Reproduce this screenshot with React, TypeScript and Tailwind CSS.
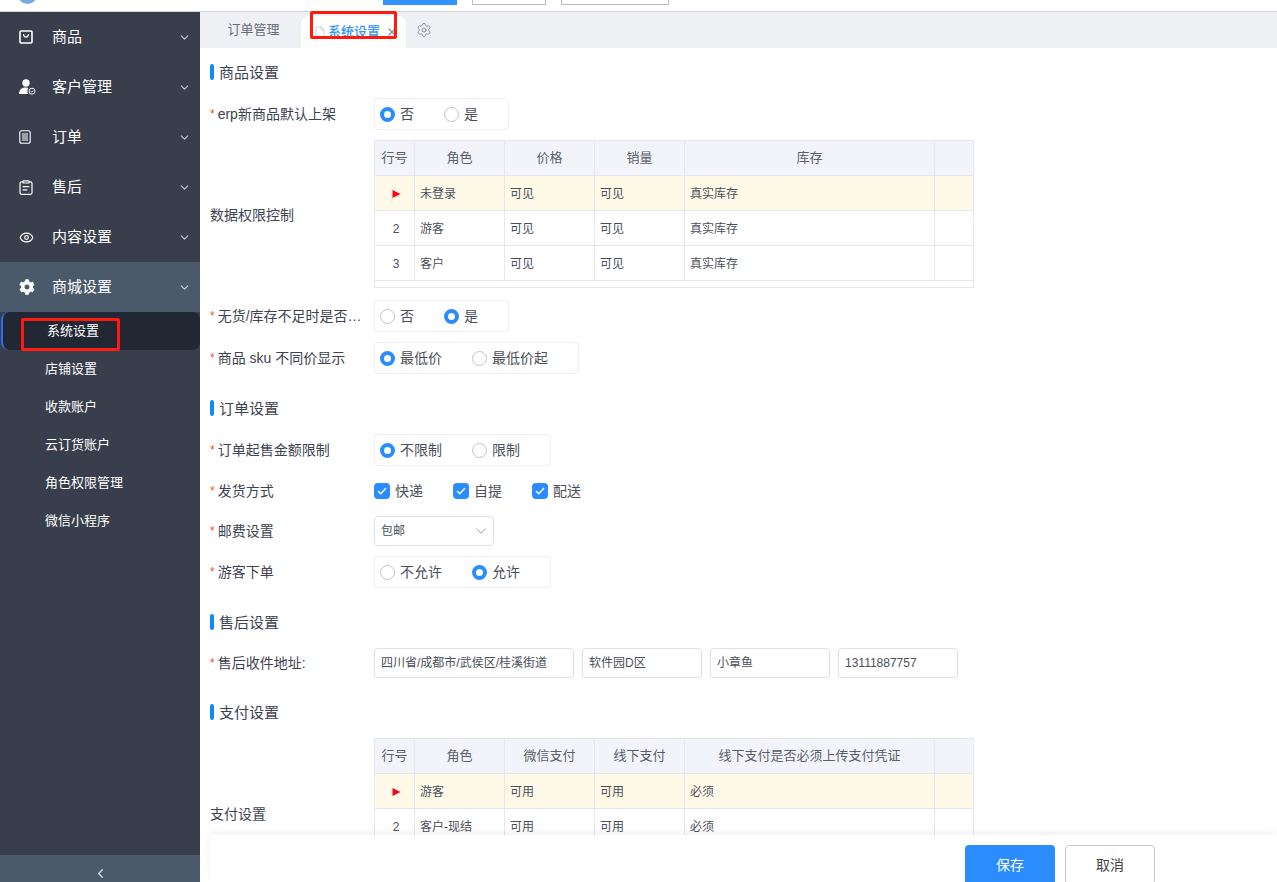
import { ChevronDown, ChevronLeft, Eye, File, Settings, X } from "lucide-react";
import { FaCog } from "react-icons/fa";
import type { ReactNode } from "react";

const font = { fontFamily: '"Liberation Sans", "Noto Sans CJK SC", sans-serif' };

function BagIcon() {
  return (
    <svg width="14" height="14" viewBox="0 0 14 14" fill="none" stroke="white" strokeWidth="1.6">
      <rect x="1" y="1" width="12" height="12" rx="1" />
      <path d="M4.4 4.2c.3 2 1.3 3 2.6 3s2.3-1 2.6-3" strokeWidth="1.2" />
    </svg>
  );
}

function UserCheckIcon() {
  return (
    <svg width="17" height="16" viewBox="0 0 17 16" fill="white">
      <circle cx="7" cy="4" r="3.7" />
      <path d="M0 15c0-4 2.6-6.5 6.5-6.5 1.2 0 2.2.2 3 .6-1.3 1.3-1.6 4-.4 5.9H0.8c-.5 0-.8-.1-.8 0z" />
      <circle cx="13" cy="12.2" r="3" fill="none" stroke="white" strokeWidth="1" />
      <path d="M11.7 12.2l1 1 1.6-1.7" fill="none" stroke="white" strokeWidth="0.9" />
    </svg>
  );
}

function ListIcon() {
  return (
    <svg width="12" height="14" viewBox="0 0 12 14" fill="none" stroke="white" strokeWidth="1.1">
      <rect x="0.8" y="0.8" width="10.4" height="12.4" rx="2" />
      <path d="M3 4h6M3 6h6M3 8h6M3 10h6" />
    </svg>
  );
}

function ClipboardIcon() {
  return (
    <svg width="14" height="15" viewBox="0 0 14 15" fill="none" stroke="white" strokeWidth="1.2">
      <path d="M4 1.8H2.6a1.6 1.6 0 0 0-1.6 1.6v9.4a1.6 1.6 0 0 0 1.6 1.6h8.8a1.6 1.6 0 0 0 1.6-1.6V3.4a1.6 1.6 0 0 0-1.6-1.6H10" />
      <rect x="4" y="0.8" width="6" height="2.2" rx="0.6" />
      <path d="M3.6 6.6h6.8M3.6 9.8h4.6" />
    </svg>
  );
}

type MenuItem = { label: string; icon: ReactNode; active?: boolean };

const menu: MenuItem[] = [
  { label: "商品", icon: <BagIcon /> },
  { label: "客户管理", icon: <UserCheckIcon /> },
  { label: "订单", icon: <ListIcon /> },
  { label: "售后", icon: <ClipboardIcon /> },
  { label: "内容设置", icon: <Eye size={15} color="white" strokeWidth={1.8} /> },
  { label: "商城设置", icon: <FaCog size={16} color="white" />, active: true },
];

const subMenu = ["店铺设置", "收款账户", "云订货账户", "角色权限管理", "微信小程序"];

function Sidebar() {
  return (
    <aside className="flex h-full w-[200px] shrink-0 flex-col bg-[#383e4b] text-white">
      {menu.map((item) => (
        <div
          key={item.label}
          className={`flex h-[50px] items-center pl-[19px] pr-[9px] ${item.active ? "bg-[#4b5a6a]" : ""}`}
        >
          <span className="flex w-[33px] shrink-0 items-center">{item.icon}</span>
          <span className="flex-1 text-[15px]">{item.label}</span>
          <ChevronDown size={13} className="text-[#c6ccd4]" />
        </div>
      ))}
      <div className="ml-px flex h-[38px] items-center rounded-lg border-l-2 border-[#2f6fe0] bg-[#212833] pl-[44px] text-[13px]">
        系统设置
      </div>
      {subMenu.map((label) => (
        <div key={label} className="flex h-[38px] items-center pl-[45px] text-[13px]">
          {label}
        </div>
      ))}
      <div className="mt-auto flex h-[27px] items-end justify-center bg-[#4b5a6a] pb-px">
        <ChevronLeft size={15} className="text-[#d7dce2]" />
      </div>
    </aside>
  );
}

function TopBar() {
  return (
    <div className="flex h-3 shrink-0 overflow-hidden border-b border-[#d4d4d4] bg-white">
      <div className="ml-[18px] -mt-[15px] h-[19px] w-[19px] rounded-full bg-[#7aa6e4]" />
      <div className="ml-[346px] -mt-[15px] h-5 w-[74px] bg-[#3194fc]" />
      <div className="ml-[15px] -mt-[15px] h-5 w-[74px] border border-[#bdbdbd]" />
      <div className="ml-[15px] -mt-[15px] h-5 w-[108px] border border-[#bdbdbd]" />
    </div>
  );
}

function Tabs() {
  return (
    <div className="flex h-9 shrink-0 items-end bg-[#eff0f4] text-[13px]">
      <div className="flex h-9 w-[101px] items-center justify-center pl-[6px] text-[#666c78]">订单管理</div>
      <div className="flex h-[32px] w-[105px] items-center rounded-t-lg bg-white pl-[13px]">
        <File size={12} strokeWidth={1} className="text-[#8fa3c8]" />
        <span className="ml-[2px] font-medium text-[#3194fc]">系统设置</span>
        <X size={12} strokeWidth={2.5} className="ml-[6px] text-[#8a8f99]" />
      </div>
      <div className="flex h-9 items-center pl-[10px]">
        <Settings size={16} strokeWidth={1} className="text-[#5f6672]" />
      </div>
    </div>
  );
}

function SectionTitle({ title, className }: { title: string; className: string }) {
  return (
    <div className={`flex h-4 items-center text-[15px] leading-4 text-[#3d4350] ${className}`}>
      <span className="mr-[5px] h-4 w-1 rounded-sm bg-[#0f8aff]" />
      <span className="pt-[2px]">{title}</span>
    </div>
  );
}

function Field({
  label,
  required = true,
  className,
  labelClassName = "",
  children,
}: {
  label: string;
  required?: boolean;
  className: string;
  labelClassName?: string;
  children: ReactNode;
}) {
  return (
    <div className={`flex items-center ${className}`}>
      <div className={`flex w-[164px] shrink-0 items-center pr-[10px] text-[14px] text-[#3d4350] ${labelClassName}`}>
        {required && <span className="mr-[3px] text-[12px] text-[#f0522f]">*</span>}
        <span className="truncate">{label}</span>
      </div>
      {children}
    </div>
  );
}

function RadioBox({ options, selected }: { options: string[]; selected: number }) {
  return (
    <div className="flex h-8 items-center rounded-sm border border-[#eeeef3] pl-[5px] text-[14px] text-[#4a4f5a]">
      {options.map((option, i) => (
        <div key={option} className="mr-[30px] flex items-center">
          {i === selected ? (
            <span className="h-[15px] w-[15px] rounded-full border-[4px] border-[#2a8cff] bg-white" />
          ) : (
            <span className="h-[15px] w-[15px] rounded-full border border-[#c4c4c4] bg-white" />
          )}
          <span className="ml-[5px] whitespace-nowrap">{option}</span>
        </div>
      ))}
    </div>
  );
}

function Checkbox({ label }: { label: string }) {
  return (
    <div className="mr-[30px] flex items-center text-[14px] text-[#4a4f5a]">
      <span className="flex h-4 w-4 items-center justify-center rounded-sm bg-[#2a8cff]">
        <svg width="10" height="8" viewBox="0 0 10 8" fill="none" stroke="white" strokeWidth="1.4">
          <path d="M1 4l2.8 2.8L9 1" />
        </svg>
      </span>
      <span className="ml-[5px]">{label}</span>
    </div>
  );
}

function TextBox({ value, width }: { value: string; width: string }) {
  return (
    <div className={`flex h-[30px] items-center rounded-sm border border-[#dfe1e6] pl-[6px] text-[12px] text-[#4a4f5a] ${width}`}>
      {value}
    </div>
  );
}

type TableProps = {
  headers: string[];
  rows: string[][];
};

const colWidths = ["w-[40px]", "w-[90px]", "w-[90px]", "w-[90px]", "w-[250px]", "w-[39px]"];

function DataTable({ headers, rows }: TableProps) {
  return (
    <div className="h-[148px] w-[600px] shrink-0 border-b border-r border-[#e4e7ef]">
      <div className="flex h-[35px] bg-[#f2f4f9] text-[13px] text-[#5a5f6c]">
        {["行号", ...headers, ""].map((h, i) => (
          <div
            key={i}
            className={`flex shrink-0 items-center justify-center border-l border-t border-[#e4e7ef] ${colWidths[i]}`}
          >
            {h}
          </div>
        ))}
      </div>
      {rows.map((row, r) => (
        <div key={r} className={`flex h-[35px] text-[12px] text-[#4a4f5a] ${r === 0 ? "bg-[#fff9e8]" : ""}`}>
          <div className="flex w-[40px] shrink-0 items-center justify-center border-l border-t border-[#e4e7ef] pl-[3px] pt-[2px]">
            {r === 0 ? (
              <svg width="9" height="8" viewBox="0 0 9 8" fill="#ff0018">
                <path d="M0.5 0L8.5 4L0.5 8z" />
              </svg>
            ) : (
              r + 1
            )}
          </div>
          {row.map((cell, c) => (
            <div
              key={c}
              className={`flex shrink-0 items-center border-l border-t border-[#e4e7ef] pl-[5px] pt-[2px] ${colWidths[c + 1]}`}
            >
              {cell}
            </div>
          ))}
          <div className="w-[39px] shrink-0 border-l border-t border-[#e4e7ef]" />
        </div>
      ))}
      <div className="h-2 border-l border-t border-[#e4e7ef]" />
    </div>
  );
}

function Form() {
  return (
    <div className="flex-1 overflow-hidden bg-white pl-[10px] pt-4">
      <SectionTitle title="商品设置" className="" />
      <Field label="erp新商品默认上架" className="mt-[18px]">
        <RadioBox options={["否", "是"]} selected={0} />
      </Field>
      <Field label="数据权限控制" required={false} labelClassName="pt-[2px]" className="mt-[10px]">
        <DataTable
          headers={["角色", "价格", "销量", "库存"]}
          rows={[
            ["未登录", "可见", "可见", "真实库存"],
            ["游客", "可见", "可见", "真实库存"],
            ["客户", "可见", "可见", "真实库存"],
          ]}
        />
      </Field>
      <Field label="无货/库存不足时是否允许下单" className="mt-3">
        <RadioBox options={["否", "是"]} selected={1} />
      </Field>
      <Field label="商品 sku 不同价显示" className="mt-[10px]">
        <RadioBox options={["最低价", "最低价起"]} selected={0} />
      </Field>

      <SectionTitle title="订单设置" className="mt-[26px]" />
      <Field label="订单起售金额限制" className="mt-[18px]">
        <RadioBox options={["不限制", "限制"]} selected={0} />
      </Field>
      <Field label="发货方式" className="mt-[10px] h-[30px]">
        <Checkbox label="快递" />
        <Checkbox label="自提" />
        <Checkbox label="配送" />
      </Field>
      <Field label="邮费设置" className="mt-[10px]">
        <div className="flex h-[30px] w-[120px] items-center justify-between rounded border border-[#dfe1e6] pl-[6px] pr-[3px] text-[12px] text-[#4a4f5a]">
          包邮
          <ChevronDown size={18} strokeWidth={1} className="text-[#777]" />
        </div>
      </Field>
      <Field label="游客下单" className="mt-[10px]">
        <RadioBox options={["不允许", "允许"]} selected={1} />
      </Field>

      <SectionTitle title="售后设置" className="mt-[26px]" />
      <Field label="售后收件地址:" className="mt-[18px]">
        <div className="flex gap-2">
          <TextBox value="四川省/成都市/武侯区/桂溪街道" width="w-[200px]" />
          <TextBox value="软件园D区" width="w-[120px]" />
          <TextBox value="小章鱼" width="w-[120px]" />
          <TextBox value="13111887757" width="w-[120px]" />
        </div>
      </Field>

      <SectionTitle title="支付设置" className="mt-[26px]" />
      <Field label="支付设置" required={false} labelClassName="pt-[4px]" className="mt-[18px]">
        <DataTable
          headers={["角色", "微信支付", "线下支付", "线下支付是否必须上传支付凭证"]}
          rows={[
            ["游客", "可用", "可用", "必须"],
            ["客户-现结", "可用", "可用", "必须"],
            ["客户-月结", "可用", "可用", "必须"],
          ]}
        />
      </Field>
    </div>
  );
}

export default function App() {
  return (
    <div className="relative flex h-[882px] w-full flex-col overflow-hidden bg-white" style={font}>
      <TopBar />
      <div className="flex min-h-0 flex-1">
        <Sidebar />
        <main className="flex min-w-0 flex-1 flex-col">
          <Tabs />
          <Form />
        </main>
      </div>

      {/* bottom action bar floats over the form */}
      <div className="absolute bottom-0 left-[210px] right-0 flex h-[47px] justify-end bg-white pr-[122px] pt-[10px] shadow-[0_-4px_8px_rgba(0,0,0,0.05)]">
        <button className="h-10 w-[90px] rounded-sm bg-[#2a8cff] text-[14px] text-white">保存</button>
        <button className="ml-[10px] h-10 w-[90px] rounded-sm border border-[#c8c8c8] bg-white text-[14px] text-[#444]">
          取消
        </button>
      </div>

      {/* red annotation boxes from the screenshot */}
      <div className="absolute left-[310px] top-[11px] h-[28px] w-[87px] rounded-[2px] border-[3px] border-[#ff1a0f]" />
      <div className="absolute left-[21px] top-[318px] h-[33px] w-[99px] rounded-[2px] border-[3px] border-[#ff1a0f]" />
    </div>
  );
}
